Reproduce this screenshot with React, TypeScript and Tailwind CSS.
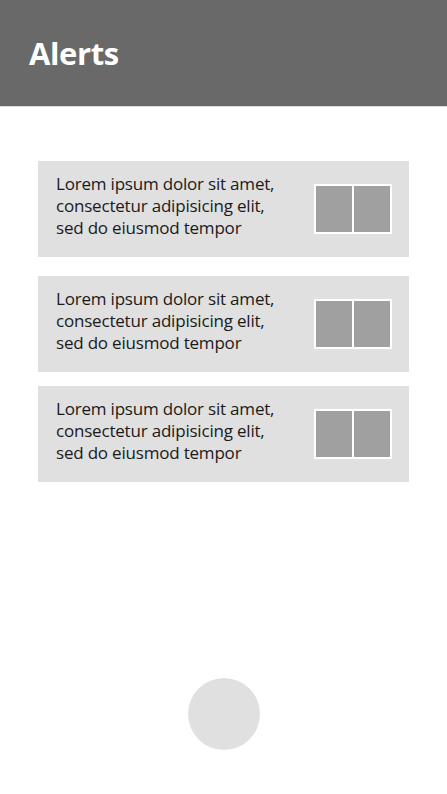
const items = [0, 1, 2];

function Thumb() {
  return (
    <div className="flex gap-[2px] border-2 border-white bg-white">
      <div className="h-[46px] w-[36px] bg-[#a0a0a0]" />
      <div className="h-[46px] w-[36px] bg-[#a0a0a0]" />
    </div>
  );
}

export default function App() {
  return (
    <div
      className="flex h-[794px] w-[447px] flex-col bg-white"
      style={{ fontFamily: '"Open Sans", "Noto Sans", sans-serif' }}
    >
      <header className="flex h-[107px] items-center border-b border-[#d8d8d8] bg-[#696969] px-[29px]">
        <h1 className="text-[31px] font-bold tracking-[-0.4px] text-white">Alerts</h1>
      </header>

      <main className="flex flex-col px-[38px] pt-[54px]">
        {items.map((i) => (
          <div
            key={i}
            className={`flex h-[96px] w-[371px] items-center justify-between bg-[#e0e0e0] pl-[18px] pr-[17px] ${
              i === 0 ? 'mb-[19px]' : 'mb-[14px]'
            }`}
          >
            <p className="mb-[6px] text-[17px] leading-[22px] tracking-[-0.2px] text-[#1a1a1a]">
              Lorem ipsum dolor sit amet,
              <br />
              consectetur adipisicing elit,
              <br />
              sed do eiusmod tempor
            </p>
            <Thumb />
          </div>
        ))}
      </main>

      <div className="mt-auto flex justify-center pb-[44px]">
        <div className="h-[72px] w-[72px] rounded-full bg-[#e0e0e0]" />
      </div>
    </div>
  );
}
